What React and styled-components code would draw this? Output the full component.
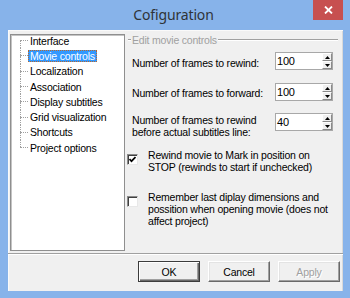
import React from 'react';
import styled, { createGlobalStyle } from 'styled-components';

const GlobalStyle = createGlobalStyle`
  html, body { margin: 0; padding: 0; background: #87b3ea; }
  body { width: 350px; height: 298px; overflow: hidden; font-family: "Liberation Sans", Arial, sans-serif; }
  #root { width: 350px; height: 298px; }
  * { box-sizing: border-box; }
`;

const Window = styled.div`
  width: 350px;
  height: 298px;
  display: flex;
  flex-direction: column;
  background: #87b3ea;
`;

const TitleBar = styled.div`
  height: 30px;
  flex: none;
  display: grid;
  grid-template-columns: 1fr auto 1fr;
`;

const Title = styled.div`
  grid-column: 2;
  align-self: center;
  font-family: "Noto Sans", "Open Sans", sans-serif;
  font-size: 14px;
  letter-spacing: -0.15px;
  color: #2f3338;
  padding-bottom: 1px;
  margin-left: -3px;
`;

const CloseButton = styled.div`
  grid-column: 3;
  justify-self: end;
  align-self: start;
  width: 30px;
  height: 20px;
  margin-right: 7px;
  background: #c75050;
  display: flex;
  align-items: center;
  justify-content: center;
`;

const Client = styled.div`
  flex: 1;
  margin: 0 7px 7px 8px;
  background: #f0f0f0;
  display: flex;
  flex-direction: column;
  box-shadow: inset 1px 1px 0 #fafafa, inset -1px 0 0 #d9d9d9;
`;

const TopSection = styled.div`
  height: 223px;
  flex: none;
  display: flex;
  gap: 2px;
  padding: 4px 4px 0 2px;
`;

const Tree = styled.div`
  width: 115px;
  height: 217px;
  flex: none;
  background: #fff;
  border: 1px solid #8f8f8f;
  box-shadow: inset 1px 1px 0 #c4c4c4;
  overflow: hidden;
`;

const TreeList = styled.div`
  margin-top: -2px;
  padding-left: 9px;
  display: flex;
  flex-direction: column;
`;

const TreeItem = styled.div`
  height: 15.3px;
  display: flex;
  align-items: stretch;
`;

const Branch = styled.div`
  width: 8px;
  flex: none;
  display: flex;
  flex-direction: column;
`;

const BranchHalf = styled.div`
  flex: 1;
  border-left: 1px dotted ${(p) => (p.$hidden ? 'transparent' : '#a0a0a0')};
`;

const Connector = styled.div`
  height: 1px;
  flex: none;
  border-top: 1px dotted #a0a0a0;
`;

const ItemLabel = styled.div`
  align-self: center;
  font-size: 10.5px;
  letter-spacing: -0.2px;
  line-height: 10px;
  padding: 0 1px;
  white-space: nowrap;
  color: ${(p) => (p.$selected ? '#fff' : '#000')};
  background: ${(p) => (p.$selected ? '#3399ff' : 'transparent')};
  border: 1px ${(p) => (p.$selected ? 'dotted #b8682e' : 'solid transparent')};
`;

const Panel = styled.div`
  flex: 1;
  display: flex;
  flex-direction: column;
  padding-right: 6px;
  font-size: 10.5px;
  letter-spacing: -0.2px;
  color: #000;
`;

const GroupHeader = styled.div`
  height: 12px;
  display: flex;
  align-items: center;
  margin: 0 -5px 0 1px;
`;

const GroupLine = styled.div`
  flex: ${(p) => (p.$grow ? 1 : 'none')};
  width: ${(p) => (p.$grow ? 'auto' : '3px')};
  height: 2px;
  border-top: 1px solid #a0a0a0;
  border-bottom: 1px solid #ffffff;
`;

const GroupTitle = styled.span`
  padding: 0 1px;
  line-height: 12px;
  color: #a0a0a0;
  white-space: nowrap;
`;

const SpinRow = styled.div`
  display: flex;
  align-items: flex-start;
  margin-top: ${(p) => p.$mt}px;
  padding-left: 5px;
`;

const RowLabel = styled.div`
  flex: 1;
  line-height: 12px;
  padding-top: ${(p) => p.$pt}px;
  white-space: nowrap;
`;

const SpinBox = styled.div`
  flex: none;
  display: flex;
  height: 18px;
`;

const SpinEdit = styled.div`
  width: 47px;
  height: 18px;
  background: #fff;
  border: 1px solid #a8a8a8;
  border-right: none;
  padding-left: 1px;
  line-height: 16px;
  font-size: 11px;
  letter-spacing: -0.2px;
`;

const SpinButtons = styled.div`
  width: 11px;
  display: flex;
  flex-direction: column;
  border: 1px solid #a8a8a8;
  border-left: none;
  background: #fff;
`;

const SpinButton = styled.div`
  flex: 1;
  background: #f0f0f0;
  border: 1px solid;
  border-color: #ffffff #8a8a8a #8a8a8a #ffffff;
  display: flex;
  align-items: center;
  justify-content: center;
`;

const CheckRow = styled.div`
  display: flex;
  align-items: flex-start;
  margin-top: ${(p) => p.$mt}px;
`;

const CheckBox = styled.div`
  width: 11px;
  height: 11px;
  flex: none;
  margin-top: 5px;
  margin-right: 10px;
  background: #fff;
  border: 1px solid;
  border-color: #8a8a8a #e8e8e8 #e8e8e8 #8a8a8a;
  box-shadow: inset 1px 1px 0 #404040;
  display: flex;
  align-items: center;
  justify-content: center;
`;

const CheckText = styled.div`
  line-height: 12px;
`;

const Separator = styled.div`
  height: 2px;
  flex: none;
  border-top: 1px solid #a0a0a0;
  border-bottom: 1px solid #ffffff;
`;

const ButtonBar = styled.div`
  display: flex;
  justify-content: flex-end;
  gap: 8px;
  padding: 6px 3px 0 0;
`;

const Button = styled.div`
  width: 62px;
  height: 21px;
  background: #f0f0f0;
  border: 1px solid;
  border-color: ${(p) => (p.$default ? '#3c3c3c' : '#ffffff #696969 #696969 #ffffff')};
  box-shadow: ${(p) =>
    p.$default
      ? 'inset 1px 1px 0 #ffffff, inset -1px -1px 0 #696969, inset -2px -2px 0 #a0a0a0'
      : 'inset -1px -1px 0 #a0a0a0, inset 1px 1px 0 #e3e3e3'};
  display: flex;
  align-items: center;
  justify-content: center;
  font-size: 10.5px;
  letter-spacing: -0.2px;
  color: ${(p) => (p.$disabled ? '#a0a0a0' : '#000')};
  text-shadow: ${(p) => (p.$disabled ? '1px 1px 0 #ffffff' : 'none')};
`;

const items = [
  'Interface',
  'Movie controls',
  'Localization',
  'Association',
  'Display subtitles',
  'Grid visualization',
  'Shortcuts',
  'Project options',
];

const UpArrow = () => (
  <svg width="5" height="3" viewBox="0 0 5 3">
    <polygon points="2.5,0 5,3 0,3" fill="#000" />
  </svg>
);

const DownArrow = () => (
  <svg width="5" height="3" viewBox="0 0 5 3">
    <polygon points="0,0 5,0 2.5,3" fill="#000" />
  </svg>
);

const Spin = ({ value }) => (
  <SpinBox>
    <SpinEdit>{value}</SpinEdit>
    <SpinButtons>
      <SpinButton>
        <UpArrow />
      </SpinButton>
      <SpinButton>
        <DownArrow />
      </SpinButton>
    </SpinButtons>
  </SpinBox>
);

export default function App() {
  return (
    <>
      <GlobalStyle />
      <Window>
        <TitleBar>
          <Title>Cofiguration</Title>
          <CloseButton>
            <svg width="9" height="8" viewBox="0 0 9 8">
              <path d="M1 0.5 L8 7.5 M8 0.5 L1 7.5" stroke="#fff" strokeWidth="1.8" />
            </svg>
          </CloseButton>
        </TitleBar>
        <Client>
          <TopSection>
            <Tree>
              <TreeList>
                {items.map((it, i) => (
                  <TreeItem key={it}>
                    <Branch>
                      <BranchHalf $hidden={i === 0} />
                      <Connector />
                      <BranchHalf $hidden={i === items.length - 1} />
                    </Branch>
                    <ItemLabel $selected={i === 1}>{it}</ItemLabel>
                  </TreeItem>
                ))}
              </TreeList>
            </Tree>
            <Panel>
              <GroupHeader>
                <GroupLine />
                <GroupTitle>Edit movie controls</GroupTitle>
                <GroupLine $grow />
              </GroupHeader>
              <SpinRow $mt={6}>
                <RowLabel $pt={5}>Number of frames to rewind:</RowLabel>
                <Spin value="100" />
              </SpinRow>
              <SpinRow $mt={13}>
                <RowLabel $pt={4}>Number of frames to forward:</RowLabel>
                <Spin value="100" />
              </SpinRow>
              <SpinRow $mt={12}>
                <RowLabel $pt={1}>
                  Number of frames to rewind
                  <br />
                  before actual subtitles line:
                </RowLabel>
                <Spin value="40" />
              </SpinRow>
              <CheckRow $mt={11}>
                <CheckBox>
                  <svg width="7" height="7" viewBox="0 0 7 7">
                    <polyline points="0.5,3 2.5,5.2 6.5,1" fill="none" stroke="#000" strokeWidth="1.7" />
                  </svg>
                </CheckBox>
                <CheckText>
                  Rewind movie to Mark in position on
                  <br />
                  STOP (rewinds to start if unchecked)
                </CheckText>
              </CheckRow>
              <CheckRow $mt={18}>
                <CheckBox />
                <CheckText>
                  Remember last diplay dimensions and
                  <br />
                  possition when opening movie (does not
                  <br />
                  affect project)
                </CheckText>
              </CheckRow>
            </Panel>
          </TopSection>
          <Separator />
          <ButtonBar>
            <Button $default>OK</Button>
            <Button>Cancel</Button>
            <Button $disabled>Apply</Button>
          </ButtonBar>
        </Client>
      </Window>
    </>
  );
}
